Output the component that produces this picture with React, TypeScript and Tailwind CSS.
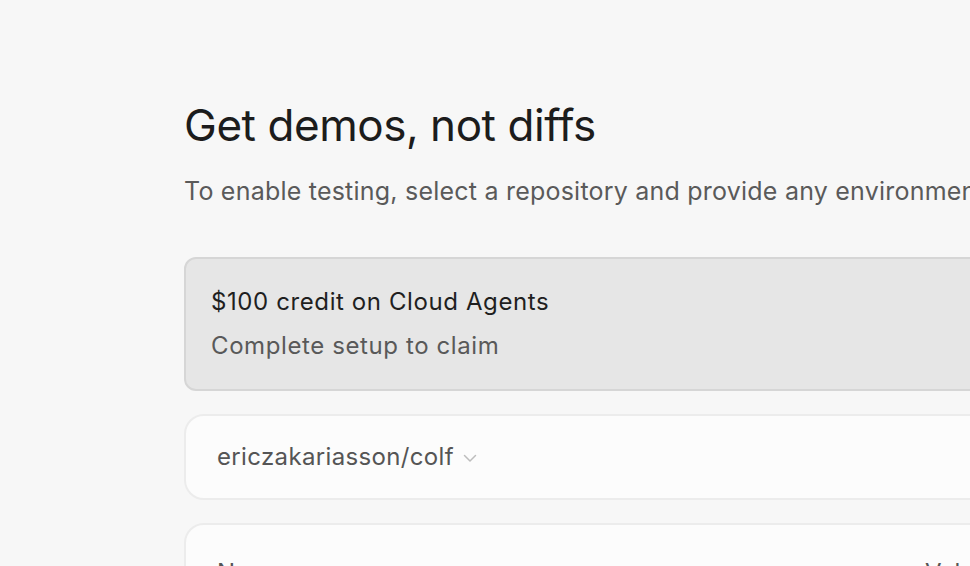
import React from "react";

export default function App() {
  return (
    <div
      className="w-[970px] h-[566px] overflow-hidden bg-[#f7f7f7]"
      style={{ fontFamily: "Inter, 'Noto Sans', sans-serif" }}
    >
      <div className="w-[1000px] pl-[184px] pt-[95px]">
        <h1 className="text-[44px] leading-[60px] font-normal text-[#1c1c1c] tracking-[-0.45px]">
          Get demos, not diffs
        </h1>
        <p className="mt-[21px] text-[25px] leading-[30px] text-[#5a5a5a] tracking-[0.22px] whitespace-nowrap">
          To enable testing, select a repository and provide any environment variables
        </p>
        <div className="mt-[51px] flex flex-col gap-[23px]">
          <div className="h-[134px] rounded-[12px] border-2 border-[#d6d6d6] bg-[#e6e6e6] px-[25px] pt-[28px]">
            <div className="text-[24px] leading-[30px] text-[#1f1f1f] tracking-[0.6px]">
              $100 credit on Cloud Agents
            </div>
            <div className="mt-[14px] text-[24px] leading-[30px] text-[#595959] tracking-[0.6px]">
              Complete setup to claim
            </div>
          </div>
          <div className="h-[86px] rounded-[20px] border-2 border-[#ececec] bg-[#fcfcfc] px-[31px] flex items-center">
            <span className="text-[24px] text-[#555555] tracking-[0.35px]">ericzakariasson/colf</span>
            <svg
              className="ml-[9px] mt-[2px]"
              width="14"
              height="9"
              viewBox="0 0 14 9"
              fill="none"
            >
              <path d="M1.5 1.5 L7 7 L12.5 1.5" stroke="#bdbdbd" strokeWidth="1.5" strokeLinecap="round" strokeLinejoin="round" />
            </svg>
          </div>
          <div className="h-[200px] rounded-[20px] border-2 border-[#ececec] bg-[#fcfcfc] px-[31px] pt-[30px]">
            <div className="flex text-[24px] text-[#555555] tracking-[0.35px]">
              <span>Name</span>
              <span className="ml-[640px]">Value</span>
            </div>
          </div>
        </div>
      </div>
    </div>
  );
}
